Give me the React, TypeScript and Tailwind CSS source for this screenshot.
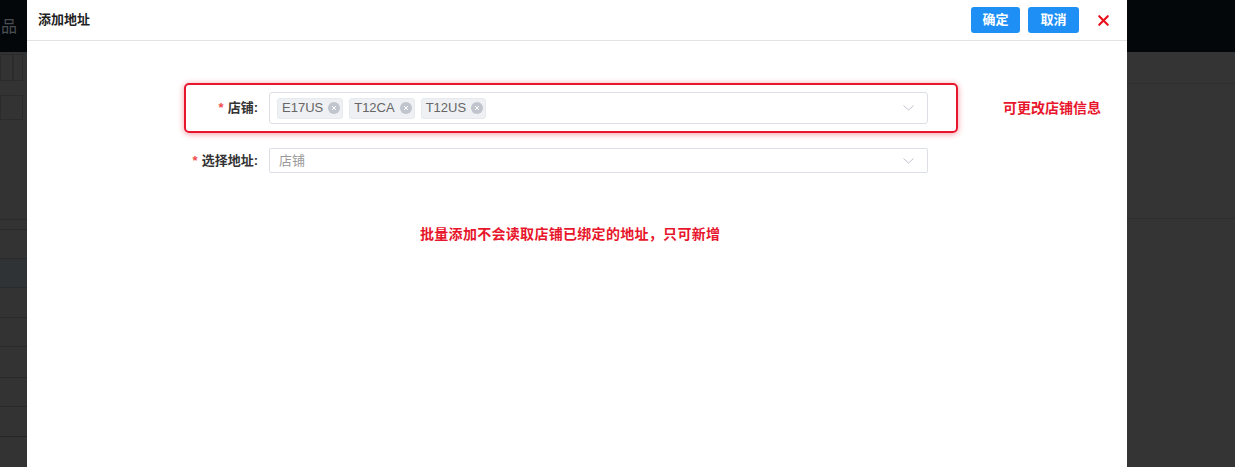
import { X } from "lucide-react";

const TAGS = ["E17US", "T12CA", "T12US"];

function Chevron() {
  return (
    <svg width="11" height="6" viewBox="0 0 11 6" fill="none">
      <polyline points="0.5,0.5 5.5,5 10.5,0.5" stroke="#c0c4cc" strokeWidth="1" />
    </svg>
  );
}

function Tag({ label }: { label: string }) {
  return (
    <span className="flex items-center h-[21px] pl-[4px] pr-[2px] gap-[5px] rounded-[3px] bg-[#eef0f3] border border-[#e6e9ed] text-[13px] text-[#666]">
      {label}
      <span className="flex items-center justify-center w-[12px] h-[12px] rounded-full bg-[#c0c4cc]">
        <svg width="6" height="6" viewBox="0 0 6 6">
          <path d="M1 1L5 5M5 1L1 5" stroke="#fff" strokeWidth="1" />
        </svg>
      </span>
    </span>
  );
}

function LeftStrip() {
  return (
    <div className="w-[27px] shrink-0 flex flex-col bg-[#333]">
      <div className="h-[52px] bg-[#03070a] flex items-center pl-[1px] pt-[1px] text-[16px] text-[#4a4d52] overflow-hidden">品</div>
      <div className="h-[32px] pt-[2px] flex">
        <div className="w-[13px] h-[27px] border border-[#2b2b2b]" />
        <div className="w-[10px] h-[27px] border border-[#2b2b2b]" />
      </div>
      <div className="h-[135px] pt-[11px]">
        <div className="w-[23px] h-[25px] border border-[#2b2b2b]" />
      </div>
      <div className="h-[10px] border-t border-[#2b2b2b]" />
      <div className="h-[29px] border-t border-[#2a2a2a]" />
      <div className="h-[30px] bg-[#2f3336] border-y border-[#2a2a2a]" />
      <div className="h-[30px] border-b border-[#2a2a2a]" />
      <div className="h-[29px] border-b border-[#2a2a2a]" />
      <div className="h-[31px] border-b border-[#2a2a2a]" />
      <div className="h-[29px] border-b border-[#2a2a2a]" />
      <div className="h-[30px] border-b border-[#262626]" />
      <div className="flex-1" />
    </div>
  );
}

function RightStrip() {
  return (
    <div className="flex-1 flex flex-col bg-[#343434]">
      <div className="h-[52px] bg-[#03070a]" />
      <div className="h-[32px] border-b border-[#2d2d2d]" />
      <div className="h-[135px] border-b border-[#2d2d2d]" />
      <div className="flex-1" />
    </div>
  );
}

export default function App() {
  return (
    <div className="flex h-[467px] w-full overflow-hidden font-['Liberation_Sans','Noto_Sans_CJK_SC',sans-serif]">
      <LeftStrip />
      <div className="w-[1100px] shrink-0 bg-white flex flex-col">
        <header className="h-[41px] flex items-center px-[11px] border-b border-[#e3e3e3]">
          <h1 className="text-[13px] font-bold text-[#1f1f1f]">添加地址</h1>
          <div className="ml-auto flex items-center">
            <button className="w-[49px] h-[26px] rounded-[3px] bg-[#1e90f5] text-white text-[13px] font-bold">确定</button>
            <button className="ml-[8px] w-[51px] h-[26px] rounded-[3px] bg-[#1e90f5] text-white text-[13px] font-bold">取消</button>
            <X className="ml-[16px] mr-[4px] text-[#e8101c]" size={17} strokeWidth={3} />
          </div>
        </header>

        <div className="pt-[42px] pl-[157px] flex flex-col">
          <div className="flex items-center">
            <div className="w-[774px] h-[50px] flex items-center border-2 border-[#e8162c] rounded-[5px] shadow-[0_1px_6px_rgba(232,22,44,0.45)]">
              <label className="w-[72px] text-right text-[13px] font-semibold text-[#333]">
                <span className="text-[#f04b4b] mr-[4px]">*</span>店铺:
              </label>
              <div className="ml-[11px] w-[659px] h-[32px] flex items-center px-[7px] gap-[6px] border border-[#dcdfe6] rounded-[3px]">
                {TAGS.map((t) => (
                  <Tag key={t} label={t} />
                ))}
                <span className="ml-auto mr-[6px]">
                  <Chevron />
                </span>
              </div>
            </div>
            <span className="ml-[45px] text-[14px] font-bold text-[#e8162c]">可更改店铺信息</span>
          </div>

          <div className="flex items-center mt-[15px]">
            <label className="w-[74px] text-right text-[13px] font-semibold text-[#333]">
              <span className="text-[#f04b4b] mr-[4px]">*</span>选择地址:
            </label>
            <div className="ml-[11px] w-[659px] h-[25px] flex items-center px-[9px] border border-[#dcdfe6] rounded-[2px]">
              <span className="text-[13px] text-[#999]">店铺</span>
              <span className="ml-auto mr-[4px]">
                <Chevron />
              </span>
            </div>
          </div>
        </div>

        <p className="mt-[51px] ml-[393px] text-[14px] font-bold tracking-[0.3px] text-[#e8162c]">
          批量添加不会读取店铺已绑定的地址，只可新增
        </p>
      </div>
      <RightStrip />
    </div>
  );
}
